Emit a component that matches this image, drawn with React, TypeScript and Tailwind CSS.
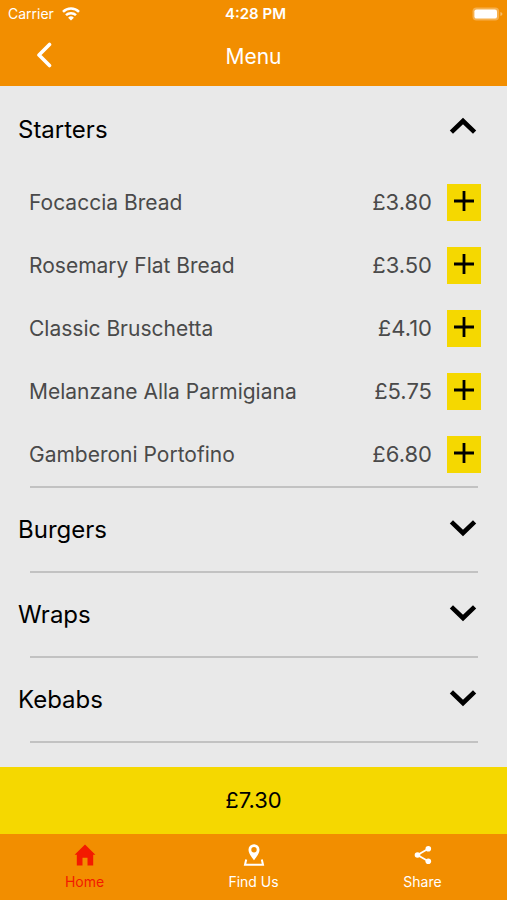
import { useState } from "react";

type Item = { name: string; price: string };
type Section = { title: string; items: Item[] };

const sections: Section[] = [
  {
    title: "Starters",
    items: [
      { name: "Focaccia Bread", price: "£3.80" },
      { name: "Rosemary Flat Bread", price: "£3.50" },
      { name: "Classic Bruschetta", price: "£4.10" },
      { name: "Melanzane Alla Parmigiana", price: "£5.75" },
      { name: "Gamberoni Portofino", price: "£6.80" },
    ],
  },
  { title: "Burgers", items: [] },
  { title: "Wraps", items: [] },
  { title: "Kebabs", items: [] },
];

function WifiIcon() {
  return (
    <svg width="18" height="14" viewBox="0 0 18 14" fill="none" stroke="currentColor" strokeWidth="2.5" aria-hidden="true">
      <path d="M1 4.8a11.4 11.4 0 0 1 16 0" />
      <path d="M4 8.200a7.100 7.100 0 0 1 10 0" />
      <path d="M9 13.600 6.100 10.700a4.100 4.100 0 0 1 5.800 0Z" fill="currentColor" stroke="none" />
    </svg>
  );
}

function BatteryIcon() {
  return (
    <svg width="31" height="14" viewBox="0 0 31 14" fill="none" aria-hidden="true">
      <rect x="0.5" y="0.5" width="26.6" height="13" rx="4" fill="#fff" fillOpacity="0.3" />
      <rect x="2.4" y="2.4" width="22.6" height="9.2" rx="2.2" fill="#fff" />
      <path d="M28.4 5v4c1.4-.5 2-1.1 2-2s-.6-1.5-2-2Z" fill="#fff" fillOpacity="0.4" />
    </svg>
  );
}

function BackIcon() {
  return (
    <svg width="16" height="26" viewBox="0 0 16 26" fill="none" stroke="currentColor" strokeWidth="3.6" strokeLinecap="round" strokeLinejoin="round" aria-hidden="true">
      <path d="M13.5 2.5 3 13l10.5 10.5" />
    </svg>
  );
}

function Chevron({ open }: { open: boolean }) {
  return (
    <svg width="28" height="18" viewBox="0 0 28 18" fill="none" stroke="currentColor" strokeWidth="4.6" aria-hidden="true">
      <path d={open ? "M2.4 15.2 14 4l11.6 11.2" : "M2.4 2.8 14 14l11.6-11.2"} />
    </svg>
  );
}

function PlusIcon() {
  return (
    <svg width="20" height="20" viewBox="0 0 20 20" stroke="currentColor" strokeWidth="2.8" aria-hidden="true">
      <path d="M10 0v20M0 10h20" />
    </svg>
  );
}

function HomeIcon() {
  return (
    <svg width="22" height="22" viewBox="0 0 22 22" fill="currentColor" aria-hidden="true">
      <path d="M11 .5.6 10.8h2.200v10.700h5.700v-7.800h5v7.800h5.700V10.800h2.200Z" />
    </svg>
  );
}

function PinIcon() {
  return (
    <svg width="22" height="22" viewBox="0 0 22 22" fill="none" aria-hidden="true">
      <path fillRule="evenodd" fill="currentColor" d="M11 .2a5.500 5.500 0 0 0-5.500 5.600C5.500 10 11 16.200 11 16.200s5.500-6.200 5.500-10.400A5.500 5.500 0 0 0 11 .2Zm0 2.800a2.700 2.700 0 1 1 0 5.400A2.700 2.700 0 0 1 11 3Z" />
      <path d="M3.200 15.500 2 20.700h18l-1.200-5.200" stroke="currentColor" strokeWidth="2" />
    </svg>
  );
}

function ShareIcon() {
  return (
    <svg width="22" height="22" viewBox="0 0 22 22" fill="currentColor" aria-hidden="true">
      <path d="M16.3 4.7 5.5 11l10.8 6.3" fill="none" stroke="currentColor" strokeWidth="1.8" />
      <circle cx="5.5" cy="11" r="2.8" />
      <circle cx="16.3" cy="4.7" r="2.8" />
      <circle cx="16.3" cy="17.3" r="2.8" />
    </svg>
  );
}

const tabs = [
  { label: "Home", icon: <HomeIcon />, color: "text-[#f31a00]" },
  { label: "Find Us", icon: <PinIcon />, color: "text-white" },
  { label: "Share", icon: <ShareIcon />, color: "text-white" },
];

export default function App() {
  const [openTitle, setOpenTitle] = useState("Starters");

  return (
    <div className="flex min-h-screen flex-col bg-[#e9e9e9] font-['Inter',sans-serif]">
      <header className="bg-[#f28e00] text-white">
        <div className="grid h-7 grid-cols-3 items-center pl-2 pr-1">
          <div className="flex items-center gap-2 text-sm">
            <span>Carrier</span>
            <WifiIcon />
          </div>
          <div className="text-center text-[15px] font-semibold">4:28 PM</div>
          <div className="flex justify-end">
            <BatteryIcon />
          </div>
        </div>
        <div className="grid h-[58px] grid-cols-3 items-center pb-1">
          <button type="button" aria-label="Back" className="ml-9 w-4">
            <BackIcon />
          </button>
          <h1 className="pt-1 text-center text-[21px]">Menu</h1>
        </div>
      </header>

      <main className="flex-1 pt-[2px]">
        {sections.map((section) => {
          const open = section.title === openTitle;
          return (
            <section key={section.title}>
              <h2>
                <button
                  type="button"
                  aria-expanded={open}
                  onClick={() => setOpenTitle(open ? "" : section.title)}
                  className="flex h-[83px] w-full items-center justify-between pl-[18px] pr-[30px] text-[24px] text-black"
                >
                  <span>{section.title}</span>
                  <span className={open ? "pb-2" : "pb-1"}>
                    <Chevron open={open} />
                  </span>
                </button>
              </h2>
              {open && (
                <ul>
                  {section.items.map((item) => (
                    <li key={item.name} className="flex h-[63px] items-center pl-[29px] pr-[26px] text-[#4a4a4a]">
                      <span className="flex-1 text-[21px]">{item.name}</span>
                      <span className="text-[22px]">{item.price}</span>
                      <button
                        type="button"
                        aria-label={`Add ${item.name}`}
                        className="ml-[15px] flex h-[37px] w-[34px] items-center justify-center bg-[#f5d800] pb-1 text-black"
                      >
                        <PlusIcon />
                      </button>
                    </li>
                  ))}
                </ul>
              )}
              <hr className="ml-[30px] mr-[29px] border-t-2 border-[#c2c2c2]" />
            </section>
          );
        })}
      </main>

      <button type="button" className="h-[67px] w-full bg-[#f5d800] text-[22px] text-black">
        £7.30
      </button>

      <nav className="grid h-[66px] grid-cols-3 bg-[#f28e00]">
        {tabs.map((tab) => (
          <a key={tab.label} href="#" className={`flex flex-col items-center gap-1.5 pt-[10px] text-sm ${tab.color}`}>
            {tab.icon}
            <span>{tab.label}</span>
          </a>
        ))}
      </nav>
    </div>
  );
}
